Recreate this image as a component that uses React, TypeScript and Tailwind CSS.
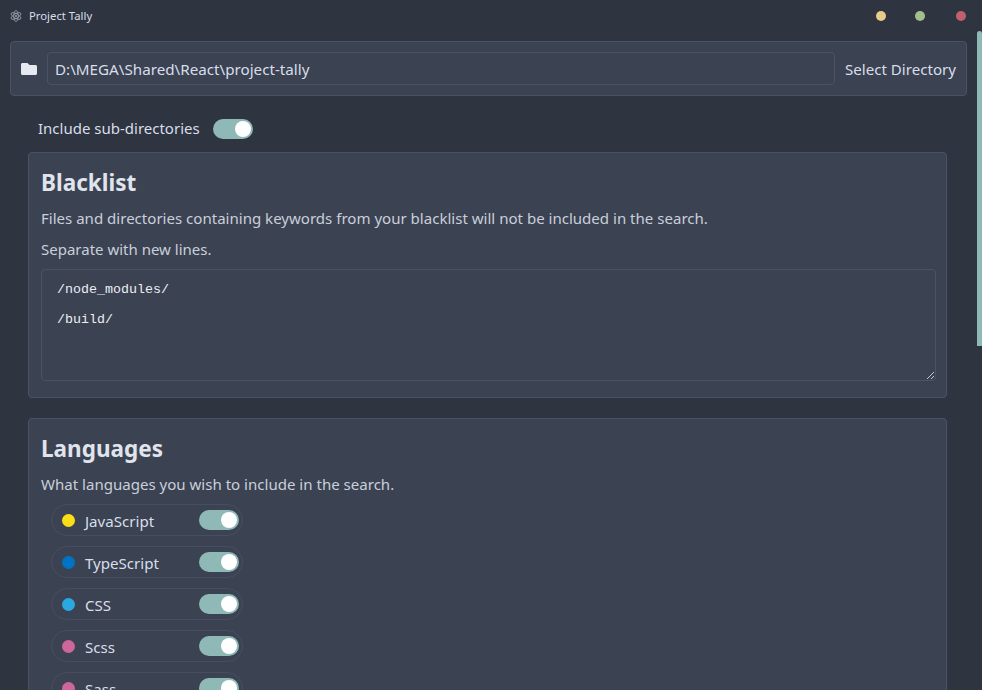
import { FaFolder } from 'react-icons/fa'

const languages = [
  { name: 'JavaScript', color: 'bg-[#fbdf16]' },
  { name: 'TypeScript', color: 'bg-[#0173c6]' },
  { name: 'CSS', color: 'bg-[#2aa9e1]' },
  { name: 'Scss', color: 'bg-[#cd669a]' },
  { name: 'Sass', color: 'bg-[#cd669a]' },
]

function Toggle() {
  return (
    <div className="flex h-5 w-10 shrink-0 items-center justify-end rounded-full bg-[#8fb9b7] pr-[2px]">
      <div className="h-4 w-4 rounded-full bg-white" />
    </div>
  )
}

function AppIcon() {
  return (
    <svg width="12" height="12" viewBox="0 0 24 24" fill="none" stroke="#9aa1ad" strokeWidth="1.6">
      <ellipse cx="12" cy="12" rx="11" ry="4.5" transform="rotate(30 12 12)" />
      <ellipse cx="12" cy="12" rx="11" ry="4.5" transform="rotate(90 12 12)" />
      <ellipse cx="12" cy="12" rx="11" ry="4.5" transform="rotate(150 12 12)" />
      <circle cx="12" cy="12" r="1.8" fill="#9aa1ad" stroke="none" />
    </svg>
  )
}

export default function App() {
  return (
    <div className="flex h-[690px] w-[982px] flex-col overflow-hidden bg-[#2e3440] font-['Noto_Sans',sans-serif] text-[#d8dee9]">
      {/* Title bar */}
      <div className="flex h-[31px] shrink-0 items-center pl-[10px]">
        <AppIcon />
        <span className="ml-[7px] mt-[1px] text-[11.3px] text-[#d8dee9]">Project Tally</span>
        <div className="ml-auto mr-[16px] flex items-center gap-[29px]">
          <div className="h-[10px] w-[10px] rounded-full bg-[#ebcb8b]" />
          <div className="h-[10px] w-[10px] rounded-full bg-[#a3be8c]" />
          <div className="ml-[2px] h-[10px] w-[10px] rounded-full bg-[#bf616a]" />
        </div>
      </div>

      <div className="flex min-h-0 flex-1">
        <div className="min-w-0 flex-1 pl-[10px] pt-[10px]">
          {/* Directory bar */}
          <div className="flex h-[55px] w-[957px] items-center rounded border border-[#4a5264] bg-[#3b4252] pl-[10px] pr-[10px]">
            <FaFolder className="h-4 w-4 shrink-0 text-[#e5e9f0]" />
            <div className="ml-[10px] flex h-[33px] w-[788px] items-center rounded border border-[#4a5264] pl-[7px] pt-[2px] text-[15.2px]">
              D:\MEGA\Shared\React\project-tally
            </div>
            <span className="ml-[10px] mt-[2px] whitespace-nowrap text-[15.1px]">Select Directory</span>
          </div>

          {/* Sub-directories */}
          <div className="mt-[23px] flex h-5 items-center pl-[28px]">
            <span className="mb-[2px] text-[15px]">Include sub-directories</span>
            <div className="ml-[13px]">
              <Toggle />
            </div>
          </div>

          {/* Blacklist */}
          <section className="ml-[18px] mt-[13px] h-[246px] w-[919px] rounded border border-[#4a5264] bg-[#3b4252] px-[12px] pt-[13px]">
            <h2 className="text-[22.5px] font-bold leading-[33px] text-[#e0e4ec]">Blacklist</h2>
            <p className="mt-[9px] text-[15.05px] leading-[21px] text-[#c9cfda]">
              Files and directories containing keywords from your blacklist will not be included in the search.
            </p>
            <p className="mt-[10px] text-[15px] leading-[21px] text-[#c9cfda]">Separate with new lines.</p>
            <div className="relative mt-[9px] h-[112px] w-[895px] rounded border border-[#4a5264] pl-[15px] pt-[12px] font-['Liberation_Mono',monospace] text-[13.33px] leading-[15px] text-[#eceff4]">
              <div>/node_modules/</div>
              <div className="mt-[15px]">/build/</div>
              {/* resize handle */}
              <svg className="absolute bottom-[1px] right-[1px]" width="8" height="8" viewBox="0 0 8 8" stroke="#c3c7cf" strokeWidth="1">
                <path d="M1 8 L8 1 M5 8 L8 5" />
              </svg>
            </div>
          </section>

          {/* Languages */}
          <section className="ml-[18px] mt-[20px] w-[919px] rounded border border-[#4a5264] bg-[#3b4252] px-[12px] pb-4 pt-[13px]">
            <h2 className="text-[22.5px] font-bold leading-[33px] text-[#e0e4ec]">Languages</h2>
            <p className="mt-[9px] text-[15.05px] leading-[21px] text-[#c9cfda]">
              What languages you wish to include in the search.
            </p>
            <div className="ml-[10px] mt-[9px] flex flex-col gap-[10px]">
              {languages.map(lang => (
                <div
                  key={lang.name}
                  className="flex h-[32px] w-[192px] items-center rounded-full border border-[#474e60] pl-[10px] pr-[3px]"
                >
                  <div className={`h-[13px] w-[13px] rounded-full ${lang.color}`} />
                  <span className="ml-[10px] mt-[2px] text-[15.1px]">{lang.name}</span>
                  <div className="ml-auto">
                    <Toggle />
                  </div>
                </div>
              ))}
            </div>
          </section>
        </div>

        {/* Scrollbar */}
        <div className="w-[5px] shrink-0">
          <div className="h-[315px] rounded-t-sm bg-[#8fb9b7]" />
        </div>
      </div>
    </div>
  )
}
